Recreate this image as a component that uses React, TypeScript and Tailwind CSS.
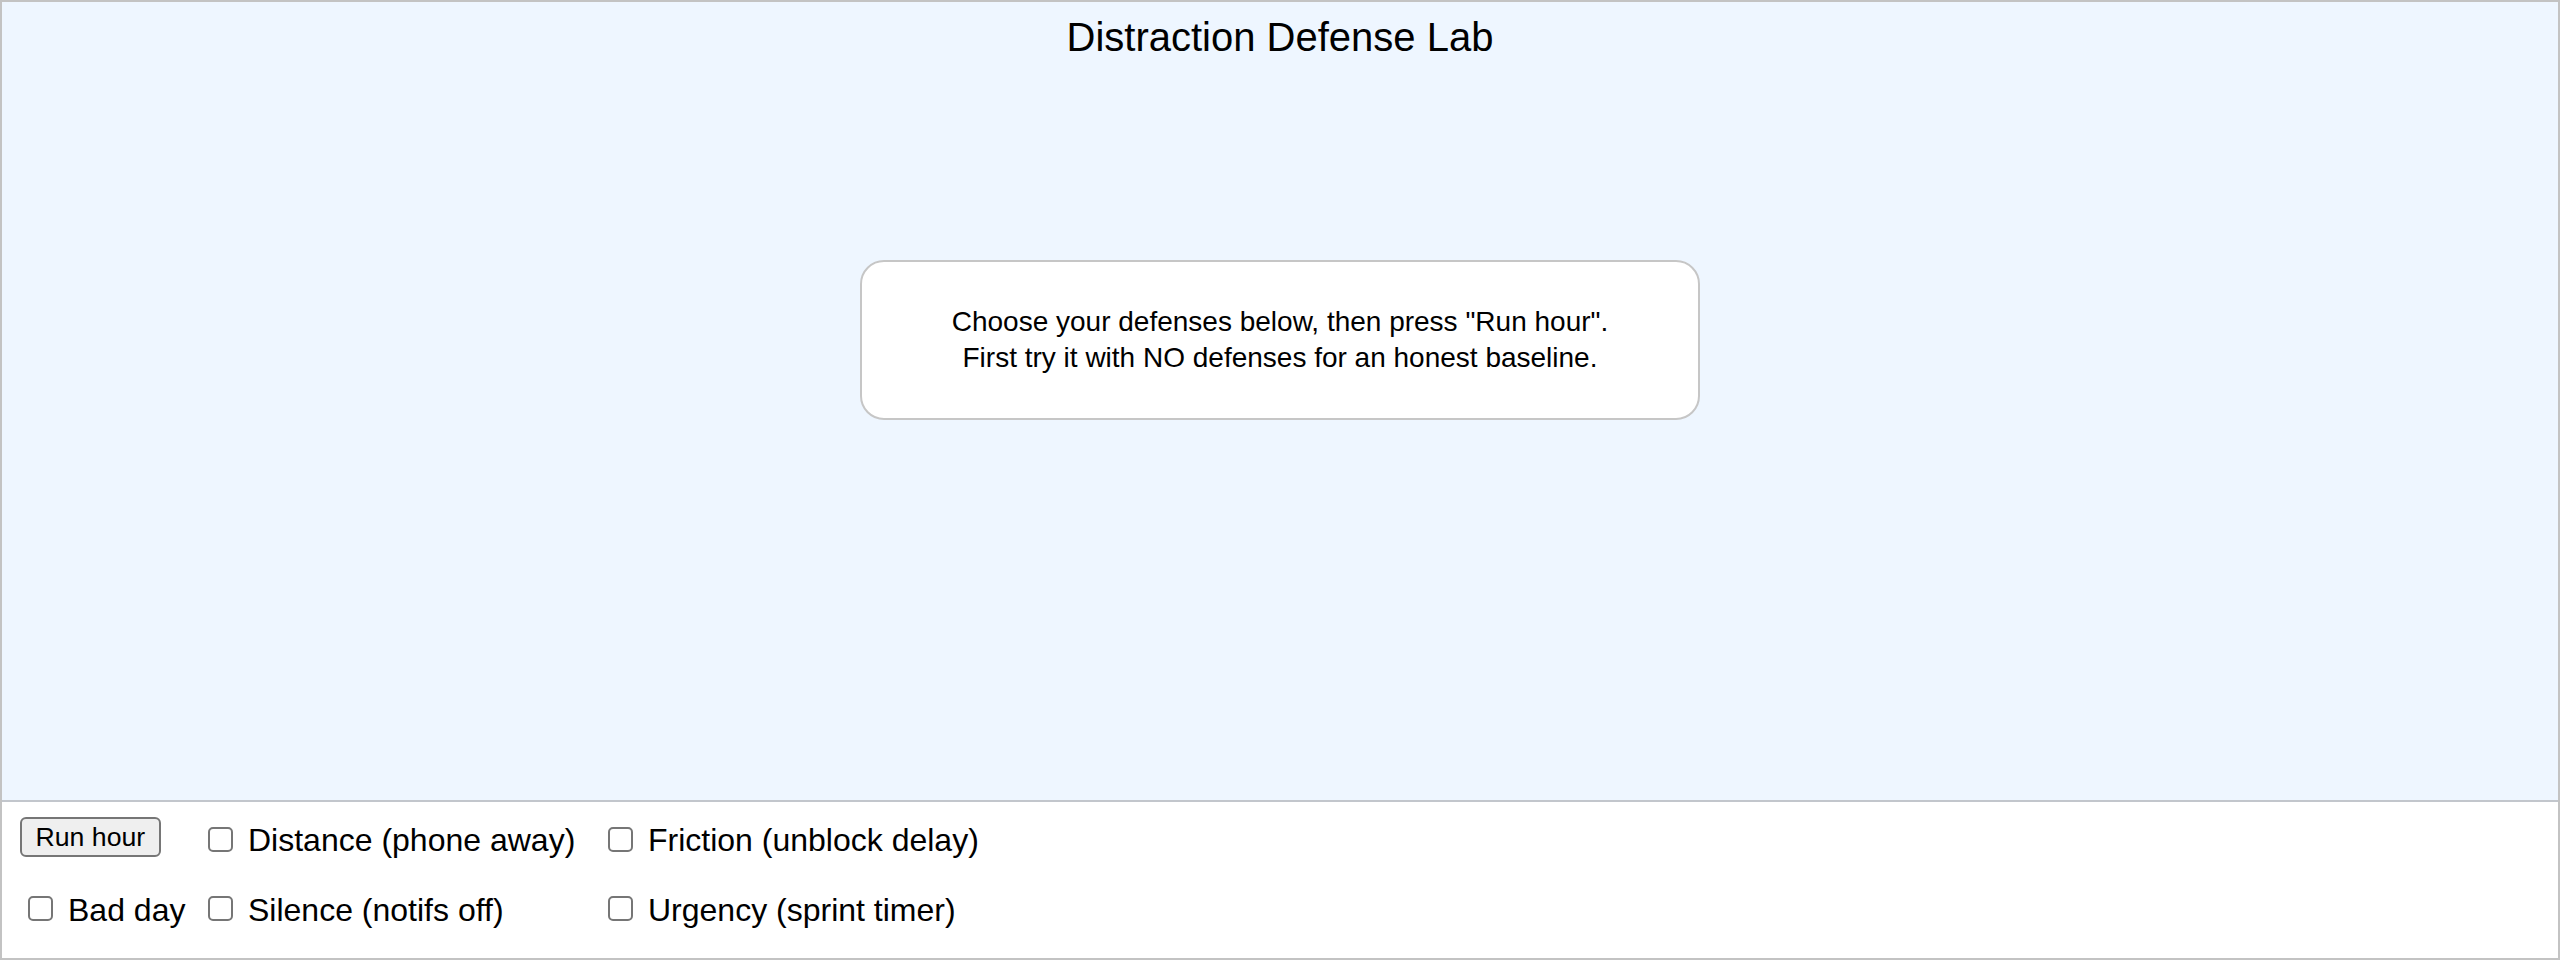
import React from "react";

const font = { fontFamily: '"Liberation Sans", Arial, Helvetica, sans-serif' };

function Check({ label }: { label: string }) {
  return (
    <label className="flex items-start leading-[37px] text-[32px] text-black whitespace-nowrap">
      <input
        type="checkbox"
        className="appearance-none w-[25px] h-[25px] ml-[8px] mr-[6px] mt-[4.6px] rounded-[5px] border-2 border-[#767676] bg-white shrink-0 checked:bg-[#0075ff] checked:border-[#0075ff]"
      />
      <span className="ml-[9px]">{label}</span>
    </label>
  );
}

export default function App() {
  return (
    <div className="w-[2560px] h-[960px] border-2 border-[#c3c3c3] flex flex-col bg-white" style={font}>
      <div className="h-[798px] bg-[#eef6ff] flex flex-col items-center pt-[12px] shrink-0">
        <h1 className="text-[40px] leading-[46px] font-normal text-black m-0">Distraction Defense Lab</h1>
        <div className="mt-[200px] w-[840px] h-[160px] rounded-[24px] border-2 border-[#c6c6c6] bg-white flex flex-col items-center justify-center text-center text-[28px] leading-[36px] text-black">
          <div>Choose your defenses below, then press "Run hour".</div>
          <div>First try it with NO defenses for an honest baseline.</div>
        </div>
      </div>
      <div className="flex-1 border-t-2 border-[#c2c6cc] bg-white pl-[18px] pt-[15px]">
        <div className="grid grid-cols-[180px_400px_auto] items-start">
          <div>
            <button className="px-[13.5px] py-[3px] border-2 border-[#767676] rounded-[6px] bg-[#efefef] text-[26.67px] leading-[30px] text-black">
              Run hour
            </button>
          </div>
          <div className="mt-[5.4px]">
            <Check label="Distance (phone away)" />
          </div>
          <div className="mt-[5.4px]">
            <Check label="Friction (unblock delay)" />
          </div>
        </div>
        <div className="grid grid-cols-[180px_400px_auto] items-start mt-[32.4px]">
          <div>
            <Check label="Bad day" />
          </div>
          <div>
            <Check label="Silence (notifs off)" />
          </div>
          <div>
            <Check label="Urgency (sprint timer)" />
          </div>
        </div>
      </div>
    </div>
  );
}
